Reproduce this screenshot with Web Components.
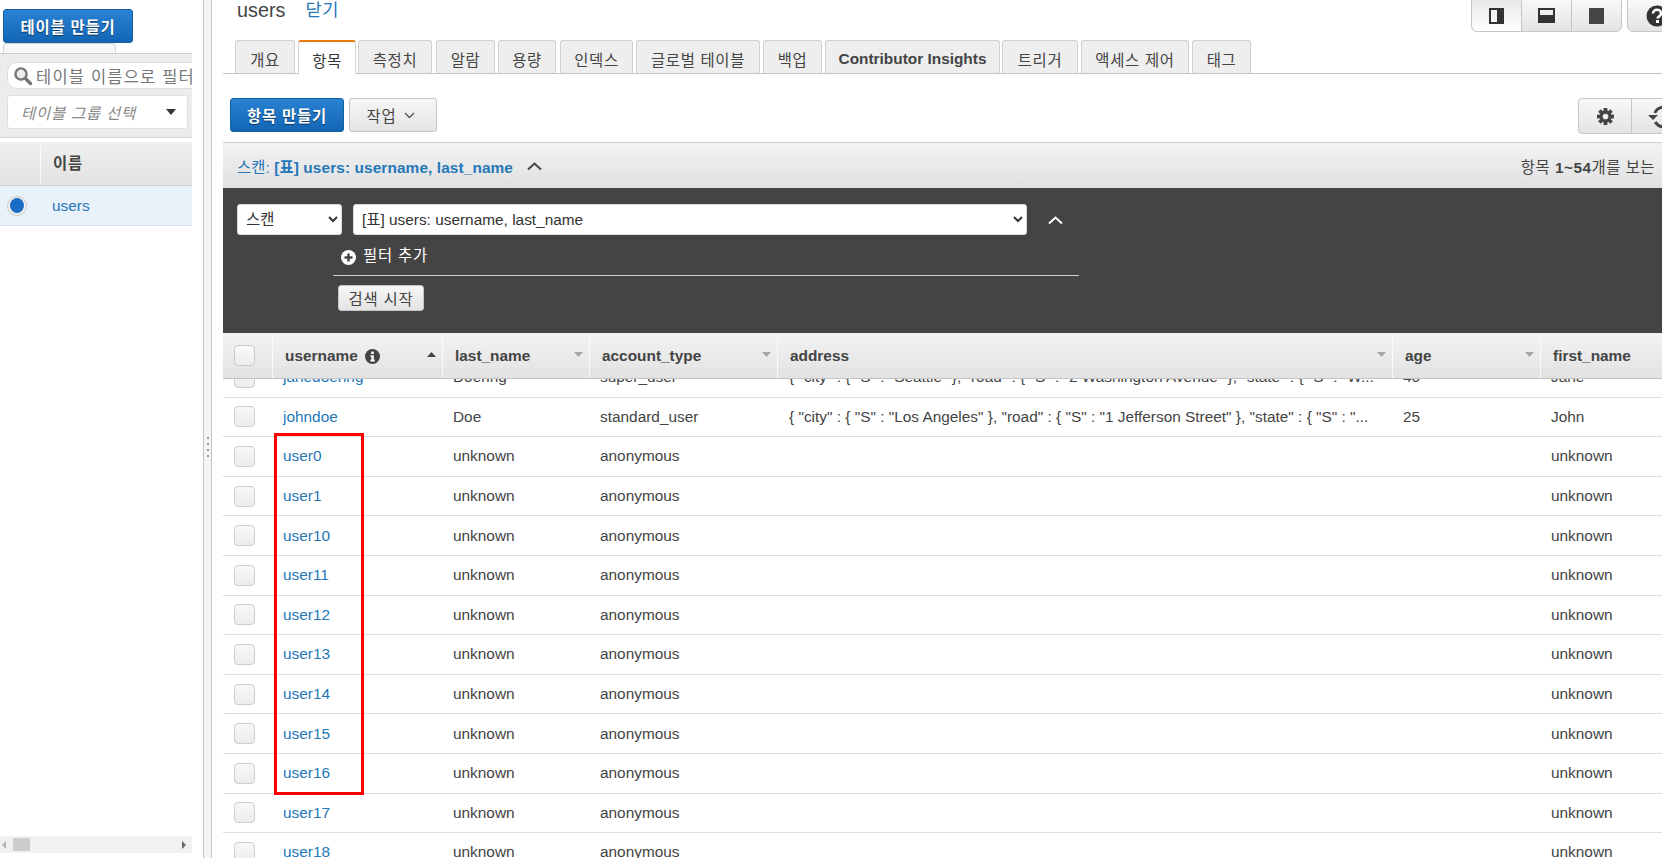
<!DOCTYPE html>
<html lang="ko">
<head>
<meta charset="utf-8">
<title>users</title>
<style>
  html, body { margin: 0; height: 858px; overflow: hidden; background: #fff; }
  body { font: 15.4px "Liberation Sans", "Noto Sans CJK KR", sans-serif; color: #444; }
</style>
</head>
<body>
<ddb-app></ddb-app>
<script>
const FONT = '"Liberation Sans", "Noto Sans CJK KR", sans-serif';
const LINK = '#2477b8';

// boton azul o gris
class DdbBtn extends HTMLElement {
  constructor() {
    super();
    this.attachShadow({ mode: 'open' });
    this.shadowRoot.innerHTML = `
<style>
  :host { display: inline-flex; align-items: center; justify-content: center; box-sizing: border-box; height: 34px;
    border: 1px solid #c6c6c6; border-radius: 3px; background: linear-gradient(#f6f6f6, #e4e4e4); color: #444;
    font: 15.4px ${FONT}; letter-spacing: .8px; white-space: nowrap; }
  :host([primary]) { border-color: #15609f; background: linear-gradient(#2a82d2, #1265b5); color: #fff; font-weight: bold;
    text-shadow: 0 1px 1px rgba(0,0,0,.5); }
</style><slot></slot>`;
  }
}
customElements.define('ddb-btn', DdbBtn);

// panel izquierdo con la lista de tablas
class DdbSidebar extends HTMLElement {
  constructor() {
    super();
    this.attachShadow({ mode: 'open' });
    this.shadowRoot.innerHTML = `
<style>
  :host { display: block; width: 192px; height: 858px; flex: none; position: relative; overflow: hidden; }
  .top { padding: 9px 0 0 3px; height: 34px; }
  ddb-btn { width: 130px; }
  .stub { width: 113px; height: 10px; margin-left: 3px; box-sizing: border-box; border: 1px solid #d4d4d4; border-bottom: 0;
    border-radius: 4px 4px 0 0; background: #f7f7f7; }
  .filters { height: 85px; box-sizing: border-box; background: #ececec; border-top: 1px solid #ccc; border-bottom: 1px solid #d4d4d4;
    padding: 8px 0 0 7px; }
  .search { width: 200px; height: 27px; box-sizing: border-box; background: #fff; border: 1px solid #ddd; border-radius: 10px 0 0 10px;
    display: flex; align-items: center; padding-left: 5px; gap: 3px; color: #777; font-size: 16.5px; letter-spacing: 1.2px; white-space: nowrap; }
  .search svg { flex: none; }
  .group { width: 181px; height: 34px; margin-top: 6px; box-sizing: border-box; background: #fff; border: 1px solid #ddd; border-radius: 3px;
    display: flex; align-items: center; justify-content: space-between; padding: 0 11px 0 13px; color: #888; font-style: italic; letter-spacing: .8px; }
  .caret { width: 0; height: 0; border: 5.5px solid transparent; border-top: 6px solid #333; border-bottom: 0; }
  .head { margin-top: 4px; height: 44px; display: flex; background: linear-gradient(#f0f0f0, #e2e2e2); border-bottom: 1px solid #ccc; box-sizing: border-box;
    font-weight: bold; align-items: stretch; }
  .head i { width: 40px; border-right: 1px solid #fafafa; }
  .head span { padding-left: 12px; align-self: center; letter-spacing: .8px; position: relative; top: -2px; }
  .row { height: 40px; box-sizing: border-box; background: #e9f1fb; border-bottom: 1px solid #dde3ea; display: flex; align-items: center; }
  .radio { width: 20px; height: 20px; box-sizing: border-box; margin-left: 7px; border-radius: 50%; border: 1px solid #c8c8c8; background: #f1f1f1;
    display: flex; align-items: center; justify-content: center; }
  .radio::after { content: ""; width: 14px; height: 15px; border-radius: 50%; background: #1a6cc4; }
  .row a { margin-left: 25px; color: ${LINK}; }
  .hbar { position: absolute; left: 0; top: 836px; width: 192px; height: 17px; background: #f1f1f1; }
  .thumb { position: absolute; left: 13px; top: 2px; width: 17px; height: 13px; background: #cdcdcd; }
  .hbar b { position: absolute; top: 5px; width: 0; height: 0; border: 4px solid transparent; }
  .l { left: 0; border-right: 4px solid #b4b4b4 !important; border-left: 0 !important; margin-left: 2px; }
  .r { right: 6px; border-left: 4px solid #666 !important; border-right: 0 !important; }
</style>
<div class="top"><ddb-btn primary>테이블 만들기</ddb-btn></div>
<div class="stub"></div>
<div class="filters">
  <div class="search">
    <svg width="20" height="20" viewBox="0 0 20 20"><circle cx="8" cy="8" r="5.6" fill="#eee" stroke="#777" stroke-width="2.4"/><path d="M12.5 12.5l5 5" stroke="#777" stroke-width="3.4" stroke-linecap="round"/></svg>
    <span>테이블 이름으로 필터</span>
  </div>
  <div class="group"><span>테이블 그룹 선택</span><span class="caret"></span></div>
</div>
<div class="head"><i></i><span>이름</span></div>
<div class="row"><span class="radio"></span><a>users</a></div>
<div class="hbar"><b class="l"></b><span class="thumb"></span><b class="r"></b></div>`;
  }
}
customElements.define('ddb-sidebar', DdbSidebar);

// separador entre paneles
class DdbSplitter extends HTMLElement {
  constructor() {
    super();
    this.attachShadow({ mode: 'open' });
    this.shadowRoot.innerHTML = `
<style>
  :host { display: flex; flex-direction: column; justify-content: center; align-items: center; gap: 4px; box-sizing: border-box; flex: none;
    width: 9px; height: 858px; margin: 0 11px; border-left: 1px solid #c4c4c4; border-right: 1px solid #c4c4c4; background: #f4f4f4; }
  i { width: 2px; height: 2px; background: #999; position: relative; top: 18px; }
</style><i></i><i></i><i></i><i></i>`;
  }
}
customElements.define('ddb-splitter', DdbSplitter);

// pestañas
class DdbTabs extends HTMLElement {
  constructor() {
    super();
    this.attachShadow({ mode: 'open' });
    const tabs = [['개요',60],['항목',58],['측정치',74],['알람',59],['용량',58],['인덱스',73],['글로벌 테이블',124],['백업',59],['Contributor Insights',175],['트리거',76],['액세스 제어',108],['태그',59]];
    const gaps = [3,2,4,3,4,3,3,3,2,3,3];
    this.shadowRoot.innerHTML = `
<style>
  :host { display: flex; height: 34px; box-sizing: border-box; padding-left: 12px; border-bottom: 1px solid #c4c4c4; }
  div { box-sizing: border-box; height: 33px; border: 1px solid #d0d0d0; border-bottom: 0; border-radius: 3px 3px 0 0; background: #eee; padding-top: 3px;
    display: flex; align-items: center; justify-content: center; font-size: 15.4px; letter-spacing: .7px; flex: none; color: #444; }
  .on { height: 34px; background: #fff; border-top: 2px solid #e47911; color: #333; }
  .en { font-weight: bold; letter-spacing: 0; }
</style>` + tabs.map((t, i) => `<div class="${i === 1 ? 'on' : ''} ${i === 8 ? 'en' : ''}" style="width:${t[1]}px;margin-right:${gaps[i] || 0}px">${t[0]}</div>`).join('');
  }
}
customElements.define('ddb-tabs', DdbTabs);

// panel oscuro del escaneo
class DdbScan extends HTMLElement {
  constructor() {
    super();
    this.attachShadow({ mode: 'open' });
    this.shadowRoot.innerHTML = `
<style>
  :host { display: block; height: 145px; box-sizing: border-box; background: #444; padding: 16px 0 0 14px; color: #fff; }
  .line { display: flex; align-items: center; }
  select { box-sizing: border-box; height: 31px; background: #fff; border: 1px solid #ddd; border-radius: 3px; color: #333; font: 15.4px ${FONT}; padding-left: 4px; }
  .mode { width: 105px; }
  .index { width: 674px; margin-left: 11px; }
  .line svg { margin-left: 20px; }
  .filter { margin: 8px 0 0 96px; width: 746px; height: 33px; box-sizing: border-box; border-bottom: 1px solid #cfcfcf; display: flex; align-items: flex-start; padding: 0 0 0 8px; gap: 7px; letter-spacing: .8px; }
  .filter svg { margin-top: 7px; }
  ddb-btn { height: 26px; width: 86px; margin: 9px 0 0 101px; border-radius: 3px; }
</style>
<div class="line">
  <select class="mode"><option>스캔</option></select>
  <select class="index"><option>[표] users: username, last_name</option></select>
  <svg width="17" height="10" viewBox="0 0 17 10"><path d="M2 8.5l6.5-6 6.5 6" fill="none" stroke="#fff" stroke-width="2"/></svg>
</div>
<div class="filter">
  <svg width="15" height="15" viewBox="0 0 15 15"><circle cx="7.5" cy="7.5" r="7.5" fill="#fff"/><path d="M7.5 3.5v8M3.500 7.500h8" stroke="#444" stroke-width="2.4"/></svg>
  <span>필터 추가</span>
</div>
<ddb-btn>검색 시작</ddb-btn>`;
  }
}
customElements.define('ddb-scan', DdbScan);

const COLS = '49px 170px 147px 188px 615px 148px 123px';

// encabezado de columna
class DdbHead extends HTMLElement {
  constructor() {
    super();
    this.attachShadow({ mode: 'open' });
    const col = (name, extra, x) => `<div class="c"><span>${name}</span>${extra || ''}${x ? `<em>${x}</em>` : ''}</div>`;
    const down = '<svg width="9" height="5" viewBox="0 0 9 5"><path d="M0 0h9L4.500 5z" fill="#a6a6a6"/></svg>';
    const up = '<svg width="9" height="5" viewBox="0 0 9 5"><path d="M0 5h9L4.500 0z" fill="#444"/></svg>';
    const info = '<svg class="i" width="15" height="15" viewBox="0 0 15 15"><circle cx="7.5" cy="7.5" r="7.5" fill="#444"/><rect x="6.2" y="2.6" width="2.6" height="2.4" fill="#fff"/><path d="M5.4 6.200h3.400v4.600h1v1.600H5.400v-1.600h1V7.800h-1z" fill="#fff"/></svg>';
    this.shadowRoot.innerHTML = `
<style>
  :host { display: grid; grid-template-columns: ${COLS}; height: 46px; box-sizing: border-box; background: linear-gradient(#f3f3f3, #e2e2e2);
    border-bottom: 1px solid #c4c4c4; position: relative; z-index: 1; font-weight: bold; color: #444; padding-top: 1px; }
  .box { display: flex; align-items: center; padding-left: 11px; padding-bottom: 2px; }
  .box i { width: 21px; height: 21px; box-sizing: border-box; border: 1px solid #c9c9c9; border-radius: 4px; background: linear-gradient(#fafafa, #ececec); }
  .c { display: flex; align-items: center; box-sizing: border-box; padding: 0 6px 0 12px; border-left: 1px solid #fafafa; gap: 7px; white-space: nowrap; }
  em { margin-left: auto; font-style: normal; display: flex; position: relative; top: -2px; }
</style>
<div class="box"><i></i></div>
${col('username', info, up)}${col('last_name', '', down)}${col('account_type', '', down)}${col('address', '', down)}${col('age', '', down)}${col('first_name')}`;
  }
}
customElements.define('ddb-head', DdbHead);

// fila de la tabla, los valores llegan por atributos
class DdbRow extends HTMLElement {
  static get observedAttributes() { return ['name', 'last', 'type', 'addr', 'age', 'first']; }
  constructor() {
    super();
    this.attachShadow({ mode: 'open' });
  }
  connectedCallback() {
    const g = n => this.getAttribute(n) || '';
    const esc = s => s.replace(/"/g, '&quot;');
    this.shadowRoot.innerHTML = `
<style>
  :host { display: grid; grid-template-columns: ${COLS}; height: 39.6px; box-sizing: border-box; border-bottom: 1px solid #dedede; align-items: center; color: #444; white-space: nowrap; }
  .box { padding-left: 11px; display: flex; }
  .box i { width: 21px; height: 21px; box-sizing: border-box; border: 1px solid #cdcdcd; border-radius: 4px; background: linear-gradient(#f8f8f8, #ececec); }
  a { color: ${LINK}; padding-left: 11px; }
  div.t { padding-left: 11px; overflow: hidden; }
  div.ad { padding-left: 12px; padding-right: 20px; overflow: hidden; }
</style>
<div class="box"><i></i></div><a>${g('name')}</a><div class="t">${g('last')}</div><div class="t">${g('type')}</div><div class="ad">${esc(g('addr'))}</div><div class="t">${g('age')}</div><div class="t">${g('first')}</div>`;
  }
}
customElements.define('ddb-row', DdbRow);

// lista de items con el recuadro rojo encima
class DdbGrid extends HTMLElement {
  constructor() {
    super();
    this.attachShadow({ mode: 'open' });
    const rows = [
      { name: 'janedoering', last: 'Doering', type: 'super_user', addr: '{ "city" : { "S" : "Seattle" }, "road" : { "S" : "2 Washington Avenue" }, "state" : { "S" : "W...', age: '40', first: 'Jane' },
      { name: 'johndoe', last: 'Doe', type: 'standard_user', addr: '{ "city" : { "S" : "Los Angeles" }, "road" : { "S" : "1 Jefferson Street" }, "state" : { "S" : "...', age: '25', first: 'John' }
    ];
    ['user0','user1','user10','user11','user12','user13','user14','user15','user16','user17','user18'].forEach(n =>
      rows.push({ name: n, last: 'unknown', type: 'anonymous', first: 'unknown' }));
    this.shadowRoot.innerHTML = `
<style>
  :host { display: block; height: 480px; overflow: hidden; position: relative; }
  .list { margin-top: -21px; }
  .mark { position: absolute; left: 51px; top: 54px; width: 90px; height: 362px; box-sizing: border-box; border: 3px solid #f00; }
</style>
<div class="list"></div><div class="mark"></div>`;
    const list = this.shadowRoot.querySelector('.list');
    rows.forEach(r => {
      const el = document.createElement('ddb-row');
      Object.keys(r).forEach(k => el.setAttribute(k, r[k]));
      list.appendChild(el);
    });
  }
}
customElements.define('ddb-grid', DdbGrid);

// panel derecho
class DdbMain extends HTMLElement {
  constructor() {
    super();
    this.attachShadow({ mode: 'open' });
    this.shadowRoot.innerHTML = `
<style>
  :host { display: block; flex: 1; min-width: 0; height: 858px; overflow: hidden; }
  .title { display: flex; height: 40px; box-sizing: border-box; padding-left: 14px; }
  .title h1 { margin: 0; font: 19.8px ${FONT}; color: #444; line-height: 20px; }
  .title a { margin-left: 20px; font-size: 17.6px; color: ${LINK}; line-height: 21px; letter-spacing: .6px; }
  .seg { display: flex; height: 33px; margin-top: -1px; box-sizing: border-box; border: 1px solid #c6c6c6; background: linear-gradient(#f8f8f8, #e4e4e4); }
  .seg > span { display: flex; align-items: center; justify-content: center; border-left: 1px solid #c6c6c6; box-sizing: border-box; }
  .seg > span:first-child { border-left: 0; }
  .views { margin-left: auto; width: 151px; border-radius: 0 0 6px 6px; }
  .views span { flex: 1; }
  .views span:first-child { background: linear-gradient(#e8e8e8, #fff); border-radius: 0 0 0 6px; }
  .help { margin-left: 5px; width: 60px; margin-right: -25px; border-radius: 0 0 6px 6px; }
  .help span { border: 0; padding-left: 18px; }
  .tools { display: flex; align-items: flex-start; height: 44px; margin-top: 24px; padding-left: 7px; box-sizing: border-box; }
  .act { width: 114px; }
  .work { width: 88px; margin-left: 5px; gap: 8px; padding-right: 4px; }
  .gear { margin-left: auto; margin-right: -18px; height: 36px; margin-top: 0; width: 102px; border-radius: 4px; }
  .gear span:first-child { width: 52px; flex: none; }
  .gear span:last-child { flex: 1; justify-content: flex-start; padding-left: 16px; }
  .bar { height: 46px; box-sizing: border-box; display: flex; align-items: center; padding: 0 7px 0 14px; background: linear-gradient(#f3f3f3, #e0e0e0); border-top: 1px solid #d0d0d0; white-space: nowrap; }
  .bar b { color: ${LINK}; }
  .bar .k { color: ${LINK}; letter-spacing: .1px; }
  .bar svg { margin-left: 13px; }
  .bar .n { margin-left: auto; color: #444; letter-spacing: .5px; }
</style>
<div class="title">
  <h1>users</h1><a>닫기</a>
  <div class="seg views">
    <span><svg width="15" height="16" viewBox="0 0 15 16"><path fill="#333" fill-rule="evenodd" d="M0 0h15v16H0zM2 2v12h6V2z"/></svg></span>
    <span><svg width="17" height="15" viewBox="0 0 17 15"><path fill="#333" fill-rule="evenodd" d="M0 0h17v15H0zM2 2v5h13V2z"/></svg></span>
    <span><svg width="15" height="16" viewBox="0 0 15 16"><rect width="15" height="16" fill="#444"/></svg></span>
  </div>
  <div class="seg help"><span><svg width="22" height="22" viewBox="0 0 22 22"><circle cx="11" cy="11" r="10.500" fill="#333"/><path d="M7 8.500c0-5 8-5 8 0 0 3-3.400 2.600-3.400 5" fill="none" stroke="#fff" stroke-width="2.600"/><rect x="10" y="15" width="3" height="3" fill="#fff"/></svg></span></div>
</div>
<ddb-tabs></ddb-tabs>
<div class="tools">
  <ddb-btn primary class="act">항목 만들기</ddb-btn>
  <ddb-btn class="work">작업 <svg width="11" height="7" viewBox="0 0 11 7"><path d="M1 1l4.500 4.500L10 1" fill="none" stroke="#555" stroke-width="1.400"/></svg></ddb-btn>
  <div class="seg gear">
    <span><svg width="17" height="17" viewBox="0 0 18 18"><g fill="#444"><rect x="7" width="4" height="18"/><rect y="7" width="18" height="4"/><rect x="7" width="4" height="18" transform="rotate(45 9 9)"/><rect x="7" width="4" height="18" transform="rotate(-45 9 9)"/><circle cx="9" cy="9" r="6.500"/></g><circle cx="9" cy="9" r="3" fill="#eee"/></svg></span>
    <span><svg width="28" height="26" viewBox="0 0 28 26"><path d="M6.800 10A10 10 0 1 1 7.300 19" fill="none" stroke="#444" stroke-width="3"/><path d="M0 12h10l-5 5z" fill="#444"/></svg></span>
  </div>
</div>
<div class="bar">
  <span class="k">스캔: <b>[표] users: username, last_name</b></span>
  <svg width="17" height="10" viewBox="0 0 17 10"><path d="M2 8.500l6.500-6 6.500 6" fill="none" stroke="#444" stroke-width="2"/></svg>
  <span class="n">항목 <b style="color:#444">1~54</b>개를 보는</span>
</div>
<ddb-scan></ddb-scan>
<ddb-head></ddb-head>
<ddb-grid></ddb-grid>`;
  }
}
customElements.define('ddb-main', DdbMain);

class DdbApp extends HTMLElement {
  constructor() {
    super();
    this.attachShadow({ mode: 'open' });
    this.shadowRoot.innerHTML = `
<style>:host { display: flex; width: 1662px; height: 858px; overflow: hidden; }</style>
<ddb-sidebar></ddb-sidebar><ddb-splitter></ddb-splitter><ddb-main></ddb-main>`;
  }
}
customElements.define('ddb-app', DdbApp);
</script>
</body>
</html>
